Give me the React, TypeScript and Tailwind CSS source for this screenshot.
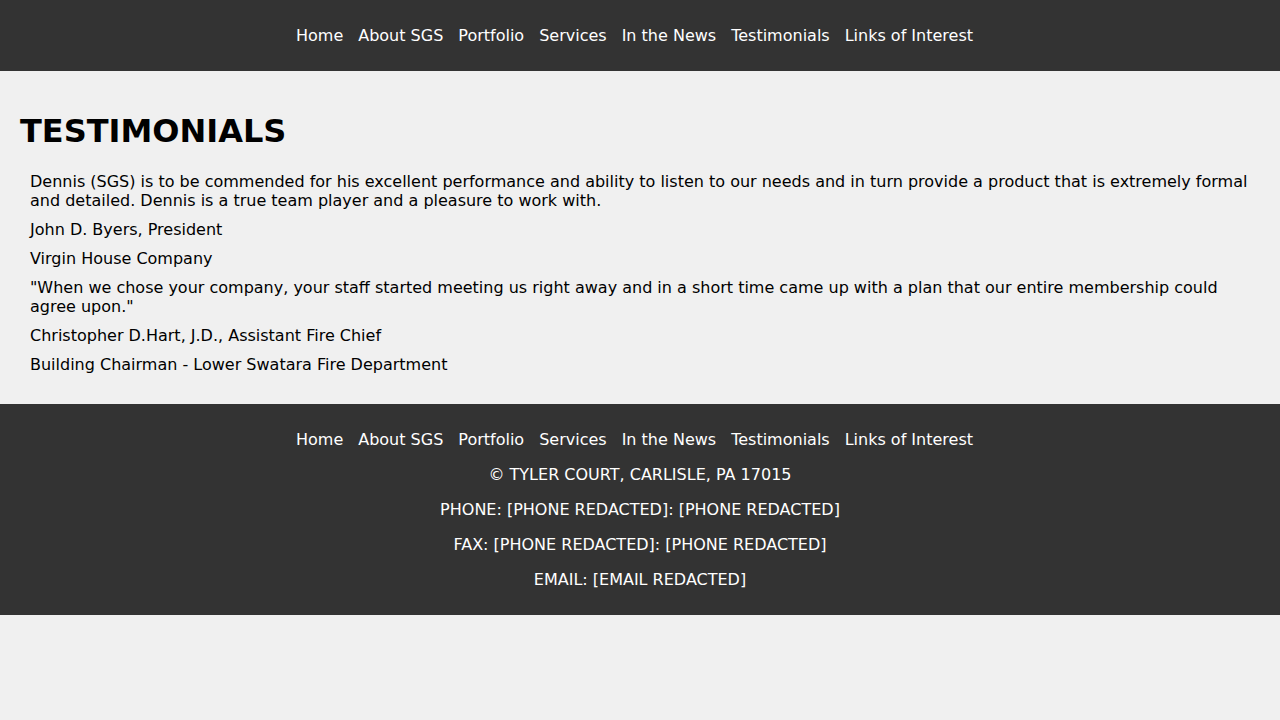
const links = [
  "Home",
  "About SGS",
  "Portfolio",
  "Services",
  "In the News",
  "Testimonials",
  "Links of Interest",
];

const Nav = () => (
  <ul className="flex justify-center gap-[15px] pr-[11px]">
    {links.map((l) => (
      <li key={l}>
        <a href="#" className="text-white leading-[19px]">
          {l}
        </a>
      </li>
    ))}
  </ul>
);

const App = () => {
  return (
    <div
      className="min-h-[720px] bg-[#f0f0f0] text-black text-[16px]"
      style={{ fontFamily: '"DejaVu Sans", sans-serif' }}
    >
      <header className="h-[71px] bg-[#333333] flex items-center justify-center">
        <Nav />
      </header>

      <main className="px-[20px] pt-[20px] pb-[30px]">
        <h1 className="mt-[22px] mb-[22px] text-[32px] leading-[37px] font-bold">TESTIMONIALS</h1>
        <div className="flex flex-col gap-[10px] px-[10px] leading-[19px]">
          <p>
            Dennis (SGS) is to be commended for his excellent performance and ability to listen to our needs
            and in turn provide a product that is extremely formal and detailed. Dennis is a true team player
            and a pleasure to work with.
          </p>
          <p>John D. Byers, President</p>
          <p>Virgin House Company</p>
          <p>
            "When we chose your company, your staff started meeting us right away and in a short time came up
            with a plan that our entire membership could agree upon."
          </p>
          <p>Christopher D.Hart, J.D., Assistant Fire Chief</p>
          <p>Building Chairman - Lower Swatara Fire Department</p>
        </div>
      </main>

      <footer className="bg-[#333333] text-white py-[26px] flex flex-col items-center gap-[16px] leading-[19px]">
        <Nav />
        <p>© TYLER COURT, CARLISLE, PA 17015</p>
        <p>PHONE: [PHONE REDACTED]: [PHONE REDACTED]</p>
        <p>FAX: [PHONE REDACTED]: [PHONE REDACTED]</p>
        <p>EMAIL: [EMAIL REDACTED]</p>
      </footer>
    </div>
  );
};

export default App;
